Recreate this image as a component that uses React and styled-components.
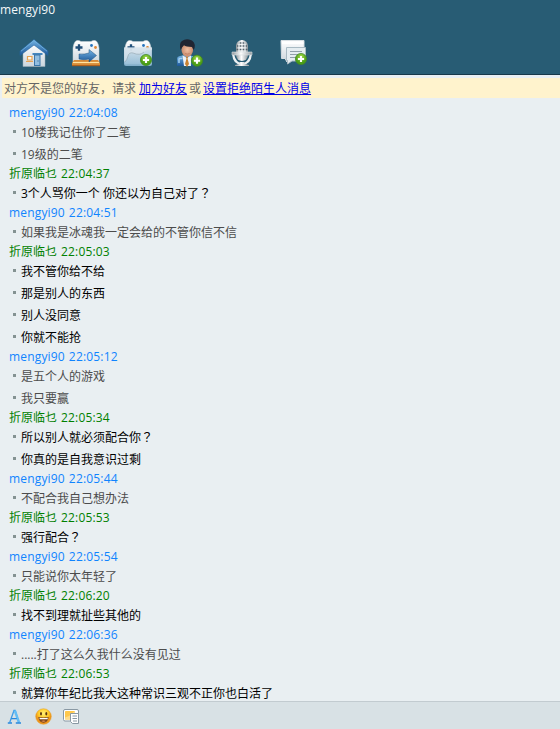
import React from 'react';
import styled, { createGlobalStyle } from 'styled-components';

const GlobalStyle = createGlobalStyle`
  body {
    margin: 0;
    font-family: "Open Sans", "Noto Sans CJK SC", sans-serif;
    font-size: 12px;
  }
`;

const Window = styled.div`
  display: flex;
  flex-direction: column;
  width: 560px;
  height: 729px;
  overflow: hidden;
  background: #e9eff2;
`;

const Header = styled.header`
  box-sizing: border-box;
  flex: none;
  height: 75px;
  background: #285c74;
  border-bottom: 1px solid #17384a;
`;

const Title = styled.div`
  height: 36px;
  line-height: 20px;
  color: #f4f8fa;
  letter-spacing: 0.1px;
`;

const Toolbar = styled.nav`
  display: flex;
  gap: 20px;
  padding-left: 18px;
`;

const ToolButton = styled.button`
  display: block;
  width: 32px;
  height: 32px;
  padding: 0;
  border: 0;
  background: none;

  svg {
    display: block;
  }
`;

const Notice = styled.div`
  flex: none;
  display: flex;
  height: 20px;
  margin: 3px 0 0 2px;
  padding-left: 2px;
  background: #fff3cd;
  color: #666;
  line-height: 21px;
  white-space: pre;
`;

const NoticeLink = styled.a`
  margin: 0 2px 0 ${(p) => p.$before}px;
  color: #0000e8;
  text-decoration: underline;
  text-underline-offset: 1px;
`;

const History = styled.main`
  flex: 1;
  min-height: 0;
  overflow: hidden;
  padding: 6px 0 0 9px;
`;

const Sender = styled.div`
  display: flex;
  gap: 4px;
  height: 17px;
  line-height: 17px;
  color: ${(p) => (p.$own ? '#008000' : '#1084ff')};
`;

const SenderName = styled.span`
  letter-spacing: ${(p) => (p.$own ? 0 : 0.17)}px;
`;

const SentAt = styled.time`
  letter-spacing: 0.17px;
`;

const Message = styled.div`
  display: flex;
  align-items: center;
  height: 22px;
  line-height: 22px;
  color: ${(p) => (p.$own ? '#000' : '#4c4c4c')};
  white-space: pre;

  &::before {
    content: "";
    width: 3px;
    height: 3px;
    margin: 0 5px 1px 4px;
    background: #849292;
  }
`;

const MessageText = styled.span`
  padding-top: 2px;
`;

const WideMark = styled.span`
  font-family: "Noto Sans CJK TC", sans-serif;
  line-height: 1;
`;

const Footer = styled.footer`
  box-sizing: border-box;
  flex: none;
  display: flex;
  gap: 10.5px;
  height: 28px;
  padding: 4px 0 0 5px;
  background: #d8e1e5;
  border-top: 1px solid #c2cbd0;
`;

const FooterButton = styled.button`
  width: 18px;
  height: 20px;
  padding: 0;
  border: 0;
  background: none;

  svg {
    display: block;
  }
`;

const Defs = () => (
  <defs>
    <linearGradient id="white" x2="0" y2="1">
      <stop stopColor="#fff" /><stop offset="1" stopColor="#cbd5dc" />
    </linearGradient>
    <linearGradient id="blue" x2="0" y2="1">
      <stop stopColor="#74b4e4" /><stop offset="1" stopColor="#1c5798" />
    </linearGradient>
    <linearGradient id="glass" x2="0" y2="1">
      <stop stopColor="#cfe0ea" /><stop offset="1" stopColor="#8db9d5" />
    </linearGradient>
    <linearGradient id="metal">
      <stop stopColor="#8e969b" /><stop offset=".45" stopColor="#fff" /><stop offset="1" stopColor="#90999e" />
    </linearGradient>
    <radialGradient id="green" cy=".3">
      <stop stopColor="#a6dc4c" /><stop offset="1" stopColor="#4b9e16" />
    </radialGradient>
    <radialGradient id="face" cx=".5" cy=".3">
      <stop stopColor="#fff176" /><stop offset=".65" stopColor="#ffc928" /><stop offset="1" stopColor="#ee941c" />
    </radialGradient>
    <radialGradient id="skin" cx=".5" cy=".5">
      <stop stopColor="#f0c0a2" /><stop offset="1" stopColor="#c98a6c" />
    </radialGradient>
  </defs>
);

const Drawing = ({ w = 32, h = 32, children }) => (
  <svg width={w} height={h} viewBox={`0 0 ${w} ${h}`}><Defs />{children}</svg>
);

const Plus = ({ x, y }) => (
  <g transform={`translate(${x} ${y})`}>
    <circle r="5.6" fill="url(#green)" stroke="#3f8720" strokeWidth=".7" />
    <path d="M-3.1 0H3.1M0-3.1V3.1" stroke="#fff" strokeWidth="2.1" />
  </g>
);

const HomeIcon = () => (
  <Drawing>
    <path d="M5 15 16 7l11 8v15.5H5z" fill="url(#white)" stroke="#9eafba" strokeWidth=".5" />
    <path d="M2 19.5V15L16 3.5 30 15v4.5L16 9z" fill="url(#blue)" stroke="#2364a0" strokeWidth=".6" />
    <path d="M3 15.2 16 4.5l13 10.7" fill="none" stroke="#75b5e0" strokeWidth=".8" />
    <path d="M14.5 18H24.5" stroke="#327bb7" strokeWidth="1.8" />
    <rect x="16.5" y="19" width="5.5" height="10.5" fill="#91bee0" stroke="#3a76a9" />
    <path d="M20 24.5v1" stroke="#275b85" />
    <path d="M9.5 20.5h4.5v3.5h-4.5zM8 25.5h7" fill="#fff8eb" stroke="#e6a454" strokeWidth="1.2" />
  </Drawing>
);

const padPath = 'M3 12Q4 5 7 4.5Q9 4 11 5.5H21Q23 4 25 4.5Q28 5 29 12V27Q29 29 27 28H5Q3 29 3 27z';

const PadFace = () => (
  <g>
    <path d="M5.5 11.5h7M9 8.2v6.6" stroke="#214f79" strokeWidth="2.3" />
    <circle cx="21.5" cy="9.5" r="1.4" fill="#2674bd" />
    <circle cx="25.5" cy="11.5" r="1.4" fill="#de8838" />
  </g>
);

const GameIcon = () => (
  <Drawing>
    <path d={padPath} fill="url(#white)" stroke="#c6d0d6" strokeWidth=".5" />
    <path d="M4 24H28L30 27V30H2V27z" fill="#d88c38" />
    <path d="M3 26.5H29" stroke="#ffe4a2" strokeWidth="1.2" />
    <path d="M2 29.7H30" stroke="#a45b1b" />
    <PadFace />
    <path d="M9 18Q15 18.5 19 17V13.5L26.5 19.5 19 26V23Q14 24.5 9 23z" fill="url(#blue)" stroke="#23537d" strokeWidth=".5" />
  </Drawing>
);

const AddGameIcon = () => (
  <Drawing>
    <path d={padPath} fill="url(#white)" stroke="#c6d0d6" strokeWidth=".5" />
    <PadFace />
    <path d="M2 11.5H30V28Q30 30 28 30H4Q2 30 2 28z" fill="url(#glass)" opacity=".88" />
    <path d="M2 26Q5 24 6 20Q7 16 11 17Q18 20 22 16Q25 13 30 14V11.5H2z" fill="#dfe8ee" opacity=".6" />
    <path d="M3 26Q5 24 6 20Q7 16 11 17Q18 20 22 16" fill="none" stroke="#9aabb5" strokeWidth=".7" />
    <Plus x={24} y={24} />
  </Drawing>
);

const AddPersonIcon = () => (
  <Drawing>
    <path d="M3 30V23Q3 20.5 6 20L11 19H15L20 20.5V30z" fill="url(#blue)" />
    <path d="M4.5 22.5h4M5 23v4" stroke="#a3d1f1" strokeWidth="1.5" />
    <path d="M8.5 19.5 13 22 17 19.5V30H10z" fill="#eef2f5" />
    <path d="M11.7 20.5h2.6l-.8 2 1.5 5.5-2 3-2-3 1.5-5.5z" fill="#c88332" />
    <ellipse cx="13.3" cy="13.8" rx="5.8" ry="7" fill="url(#skin)" />
    <path d="M6.6 14Q4.8 7 8 5Q11 2.7 15 3.5Q22 5 20.6 12L19.5 14 18 11Q12 11 10 9.3L8 11.5z" fill="#202532" />
    <path d="M11 17.5q2.3 1.3 4.6 0" fill="none" stroke="#bd785d" strokeWidth=".8" />
    <Plus x={23} y={24.7} />
  </Drawing>
);

const MicIcon = () => (
  <Drawing>
    <path d="M6 18H8Q10 27 16 27T24 18h2Q25 29 16 29T6 18z" fill="#edf1f3" />
    <rect x="10" y="4" width="12" height="21" rx="6" fill="url(#metal)" />
    <path d="M11 10H21M10.5 13.5h11M12 7h8" stroke="#53636c" strokeWidth="1.3" />
    <path d="M13 6v12M16 4v14M19 6v12" stroke="#f4f7f9" strokeWidth="1.2" />
    <path d="M6 16H26V19H6z" fill="url(#metal)" stroke="#d9dfe2" strokeWidth=".6" />
    <path d="M13.5 26h5v2l4.5 1v1h-14v-1l4.5-1z" fill="url(#metal)" />
  </Drawing>
);

const AddChatIcon = () => (
  <Drawing>
    <path d="M3 4.5H26V22H9V26L7 22.5H3.5z" fill="url(#white)" stroke="#d7dee2" />
    <path d="M4 7H25.5" stroke="#fff" strokeWidth="2" />
    <path d="M8.5 11.5H27.5V25H14L9.5 28V24.5H8.5z" fill="#e5edf1" stroke="#a9bac3" />
    <path d="M12 15.5h12M12 18.5h12M12 21.5h7" stroke="#91a0a9" strokeWidth="1.2" />
    <Plus x={23} y={23} />
  </Drawing>
);

const FontIcon = () => (
  <Drawing w={18} h={20}>
    <path d="M9 4.5 4.7 16.5M8.5 4.5H10.2L13.8 16.5" fill="none" stroke="#3d9ce8" strokeWidth="1.3" />
    <path d="M9.8 4.5 14 16.5" stroke="#63bdf5" strokeWidth="2.4" />
    <path d="M6.2 12.7H11.8M2.8 17H7M10.8 17H16" stroke="#2788dd" strokeWidth="1.3" />
  </Drawing>
);

const SmileIcon = () => (
  <Drawing w={18} h={20}>
    <circle cx="9.5" cy="10.5" r="7.8" fill="url(#face)" stroke="#e49c22" strokeWidth=".5" />
    <ellipse cx="7" cy="7.8" rx="1" ry="1.7" fill="#5b3512" />
    <ellipse cx="12.3" cy="7.8" rx="1" ry="1.7" fill="#5b3512" />
    <path d="M4.3 11q5 .8 10.4 0-.8 5.7-5.2 5.7T4.3 11z" fill="#79461c" />
    <path d="M5.5 11.8q4 .6 8.2 0v1.5H5.7z" fill="#fff" />
    <path d="M7 15q2.5-1 5 0-2.5 1.5-5 0" fill="#f09a60" />
  </Drawing>
);

const CardIcon = () => (
  <Drawing w={18} h={20}>
    <rect x="1.5" y="3.5" width="15" height="11.5" rx="1.5" fill="#fff" stroke="#8998a3" />
    <rect x="3" y="5" width="10" height="8.5" rx=".7" fill="#ffc84c" />
    <path d="M3 11.5 7 10l6-5v8.5H3z" fill="#ffdc8a" />
    <path d="M8.5 7.5H16.5V17.5H10.5L8.5 15.5z" fill="#fff" stroke="#8998a3" />
    <path d="M10.5 10h4.5M10.5 12.5h4.5M11 15h4" stroke="#8998a3" />
  </Drawing>
);

const tools = [HomeIcon, GameIcon, AddGameIcon, AddPersonIcon, MicIcon, AddChatIcon];

const PEER = 'mengyi90';
const OWN = '折原临乜';

const chat = [
  [PEER, '22:04:08', ['10楼我记住你了二笔', '19级的二笔']],
  [OWN, '22:04:37', ['3个人骂你一个 你还以为自己对了？']],
  [PEER, '22:04:51', ['如果我是冰魂我一定会给的不管你信不信']],
  [OWN, '22:05:03', ['我不管你给不给', '那是别人的东西', '别人没同意', '你就不能抢']],
  [PEER, '22:05:12', ['是五个人的游戏', '我只要赢']],
  [OWN, '22:05:34', ['所以别人就必须配合你？', '你真的是自我意识过剩']],
  [PEER, '22:05:44', ['不配合我自己想办法']],
  [OWN, '22:05:53', ['强行配合？']],
  [PEER, '22:05:54', ['只能说你太年轻了']],
  [OWN, '22:06:20', ['找不到理就扯些其他的']],
  [PEER, '22:06:36', ['.....打了这么久我什么没有见过']],
  [OWN, '22:06:53', ['就算你年纪比我大这种常识三观不正你也白活了']],
];

const ChatLine = ({ own, text }) => {
  const asks = text.endsWith('？');
  return (
    <Message $own={own}>
      <MessageText>
        {asks ? text.slice(0, -1) : text}
        {asks && <WideMark lang="zh-TW">？</WideMark>}
      </MessageText>
    </Message>
  );
};

export default function App() {
  return (
    <Window lang="zh-CN">
      <GlobalStyle />
      <Header>
        <Title>{PEER}</Title>
        <Toolbar>
          {tools.map((Icon, i) => <ToolButton key={i}><Icon /></ToolButton>)}
        </Toolbar>
      </Header>
      <Notice>
        <span>对方不是您的好友，请求</span>
        <NoticeLink $before={3}>加为好友</NoticeLink>
        <span>或</span>
        <NoticeLink $before={2}>设置拒绝陌生人消息</NoticeLink>
      </Notice>
      <History>
        {chat.map(([name, time, lines]) => (
          <section key={time}>
            <Sender $own={name === OWN}>
              <SenderName $own={name === OWN}>{name}</SenderName>
              <SentAt>{time}</SentAt>
            </Sender>
            {lines.map((line) => <ChatLine key={line} own={name === OWN} text={line} />)}
          </section>
        ))}
      </History>
      <Footer>
        <FooterButton><FontIcon /></FooterButton>
        <FooterButton><SmileIcon /></FooterButton>
        <FooterButton><CardIcon /></FooterButton>
      </Footer>
    </Window>
  );
}
